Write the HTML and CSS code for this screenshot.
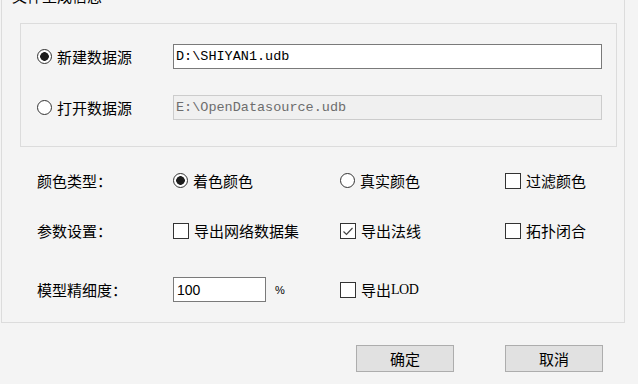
FILE: index.html
```html
<!DOCTYPE html>
<html lang="zh-CN">

<head>
    <meta charset="UTF-8">
    <meta name="viewport" content="width=device-width, initial-scale=1.0">
    <title>生成信息</title>
    <link rel="stylesheet" href="styles.css">
</head>

<body>
    <div class="dialog">
        <div class="group outer">
            <span class="group-title">文件生成信息</span>

            <div class="group inner">
                <label class="opt"><span class="radio on"></span>新建数据源</label>
                <input class="field" type="text" value="D:\SHIYAN1.udb">
                <label class="opt"><span class="radio"></span>打开数据源</label>
                <input class="field off" type="text" value="E:\OpenDatasource.udb" disabled>
            </div>

            <div class="params">
                <div class="row">
                    <span class="cell-label">颜色类型：</span>
                    <label class="cell opt"><span class="radio on"></span>着色颜色</label>
                    <label class="cell wide opt"><span class="radio"></span>真实颜色</label>
                    <label class="opt"><span class="check"></span>过滤颜色</label>
                </div>
                <div class="row">
                    <span class="cell-label">参数设置：</span>
                    <label class="cell opt"><span class="check"></span>导出网络数据集</label>
                    <label class="cell wide opt">
                        <span class="check">
                            <svg width="14" height="14" viewBox="0 0 14 14">
                                <path d="M2.5 7.5 L5.5 10.5 L11.5 4" fill="none" stroke="#444" stroke-width="1.2" />
                            </svg>
                        </span>导出法线</label>
                    <label class="opt"><span class="check"></span>拓扑闭合</label>
                </div>
                <div class="row detail">
                    <span class="cell-label">模型精细度：</span>
                    <span class="cell">
                        <input class="field small" type="text" value="100">
                        <span class="unit">%</span>
                    </span>
                    <label class="cell wide opt"><span class="check"></span>导出<span class="latin">LOD</span></label>
                </div>
            </div>
        </div>

        <div class="buttons">
            <button class="btn">确定</button>
            <button class="btn">取消</button>
        </div>
    </div>
</body>

</html>
```

FILE: styles.css
```css
body {
    margin: 0;
    background-color: #f4f4f4;
    font-family: "Noto Sans CJK SC", "Microsoft YaHei", sans-serif;
    font-size: 15px;
    color: #000;
    overflow: hidden;
}

.dialog {
    width: 638px;
    height: 384px;
}

.group {
    border: 1px solid #dcdcdc;
    box-sizing: border-box;
}

.outer {
    position: relative;
    width: 624px;
    margin: -8px 0 0 1px;
    padding: 30px 0 20px 0;
}

.group-title {
    position: absolute;
    top: -7px;
    left: 8px;
    padding: 0 2px;
    line-height: 20px;
    background-color: #f4f4f4;
}

.inner {
    display: grid;
    grid-template-columns: 136px 429px;
    grid-template-rows: 25px 25px;
    row-gap: 26px;
    align-items: center;
    width: 597px;
    margin-left: 18px;
    padding: 20px 0 26px 16px;
}

.opt {
    display: flex;
    align-items: center;
    line-height: 20px;
    white-space: nowrap;
}

.radio {
    width: 15px;
    height: 15px;
    margin-right: 5px;
    border: 1px solid #333;
    border-radius: 50%;
    box-sizing: border-box;
    background-color: #fff;
    flex: none;
}

.radio.on {
    background: radial-gradient(circle, #1c1c1c 0, #1c1c1c 4px, #fff 4.6px);
}

.check {
    display: flex;
    align-items: center;
    justify-content: center;
    width: 16px;
    height: 16px;
    margin-right: 5px;
    border: 1px solid #333;
    box-sizing: border-box;
    background-color: #fff;
    flex: none;
}

.field {
    height: 25px;
    margin: 0;
    padding: 0 2px;
    border: 1px solid #7a7a7a;
    box-sizing: border-box;
    background-color: #fff;
    font-family: "Liberation Mono", monospace;
    font-size: 13.5px;
    color: #000;
    outline: none;
}

.field.off {
    border-color: #cccccc;
    background-color: #f0f0f0;
    color: #6d6d6d;
}

.field.small {
    width: 93px;
    font-family: "Liberation Sans", Arial, sans-serif;
    font-size: 14px;
    padding-left: 3px;
}

.unit {
    margin-left: 9px;
    font-family: "Liberation Sans", Arial, sans-serif;
    font-size: 11px;
}

.params {
    margin-top: 21px;
    padding-left: 35px;
}

.row {
    display: flex;
    align-items: center;
    height: 25px;
}

.row + .row {
    margin-top: 25px;
}

.row.detail {
    margin-top: 34px;
}

.cell-label {
    width: 136px;
    flex: none;
}

.cell {
    display: flex;
    align-items: center;
    width: 167px;
    flex: none;
}

.cell.wide {
    width: 165px;
}

.latin {
    font-family: "Liberation Serif", serif;
    font-size: 14px;
    letter-spacing: -0.5px;
}

.buttons {
    display: flex;
    gap: 51px;
    margin-top: 22px;
    padding-left: 356px;
}

.btn {
    width: 98px;
    height: 27px;
    padding: 0;
    border: 1px solid #adadad;
    background-color: #e1e1e1;
    font-family: "Noto Sans CJK SC", "Microsoft YaHei", sans-serif;
    font-size: 15px;
    color: #000;
}
```
